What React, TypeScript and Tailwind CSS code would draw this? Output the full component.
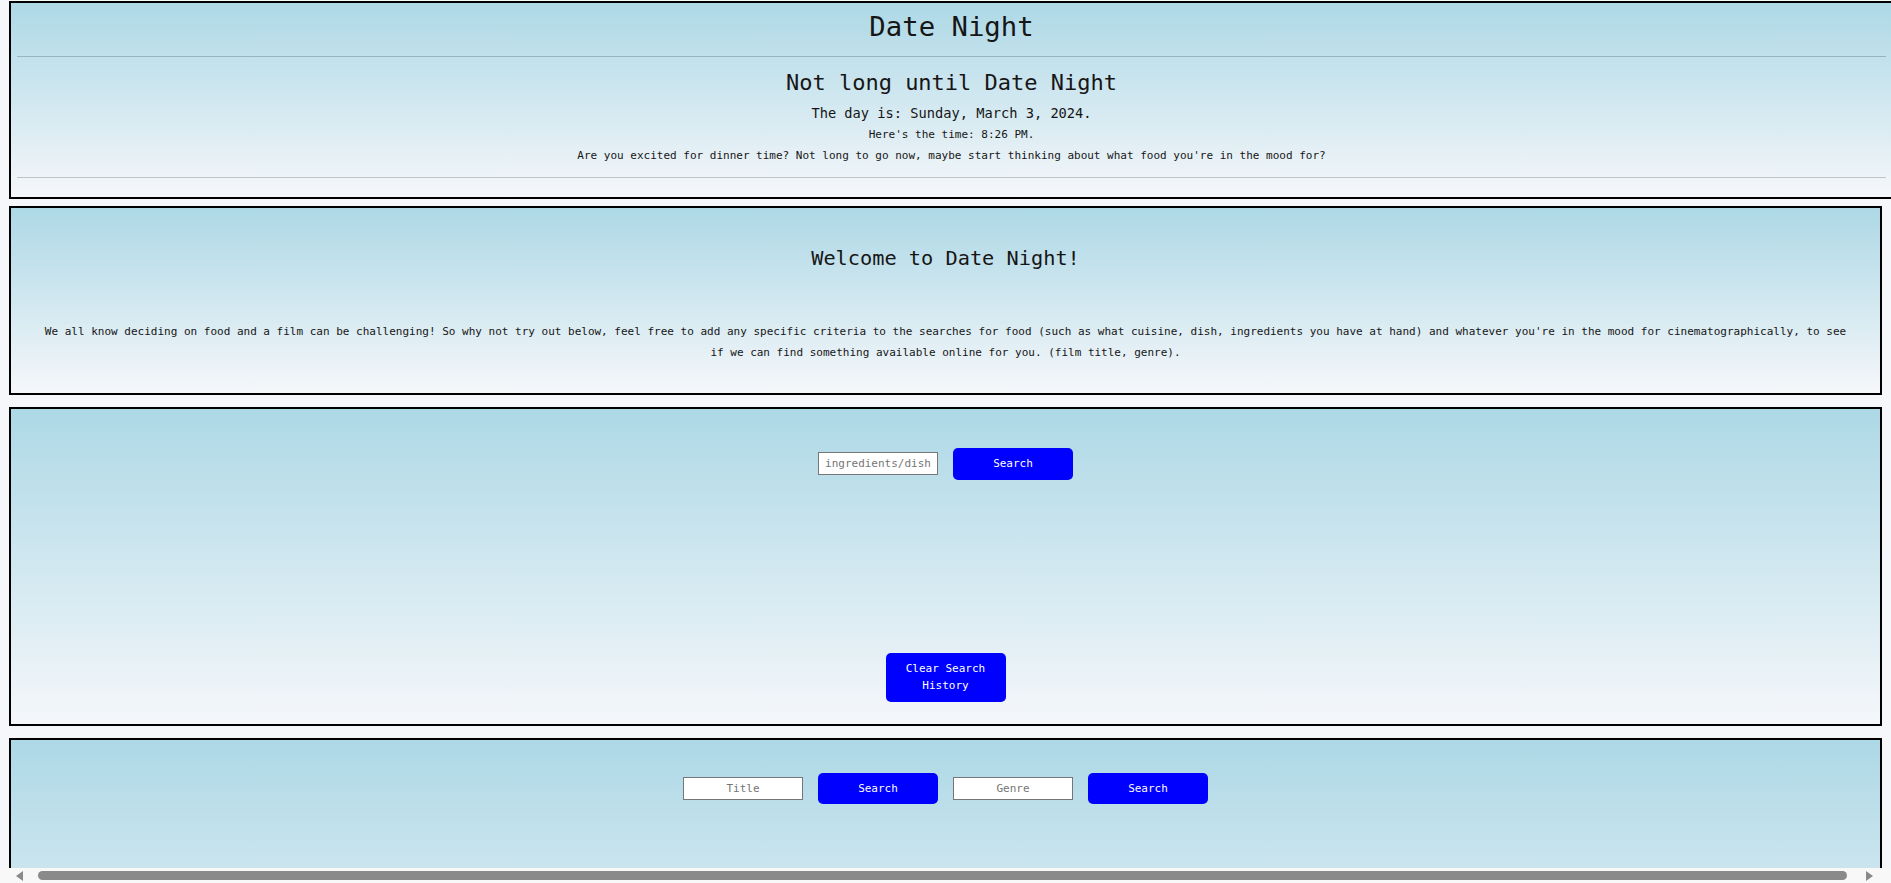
export default function App() {
  const box = "border-2 border-black bg-[linear-gradient(#add8e6,#f5f7fa)]";
  const btn =
    "w-[120px] rounded-[5px] bg-[#0000ff] py-[7px] text-[11px] leading-[17.5px] text-white";
  const inp =
    "w-[120px] h-[23px] border border-[#767676] bg-white text-center text-[11px] text-[#111] placeholder:text-[#757575] outline-none";
  return (
    <div className="h-screen w-full overflow-hidden flex flex-col bg-[#f5f7fa] text-[#161616] font-['DejaVu_Sans_Mono',monospace]">
      <div className="flex-1 min-h-0 overflow-hidden px-[9px]">
        <header className={`mt-px mr-[-12px] ${box} text-center`}>
          <h1 className="pt-[8px] pb-[13px] text-[27.3px] leading-[32px]">Date Night</h1>
          <div className="mx-[6px] h-px bg-black/20" />
          <h2 className="mt-[12px] text-[22px] leading-[28px]">Not long until Date Night</h2>
          <p className="mt-[7px] text-[13.7px] leading-[18px]">The day is: Sunday, March 3, 2024.</p>
          <p className="mt-[5px] text-[11px] leading-[16px]">Here's the time: 8:26 PM.</p>
          <p className="mt-[5px] text-[11px] leading-[16px]">
            Are you excited for dinner time? Not long to go now, maybe start thinking about what food you're in the mood for?
          </p>
          <div className="mt-[13px] mb-[19px] mx-[6px] h-px bg-black/20" />
        </header>

        <section className={`mt-[7px] ${box} text-center px-[28px] pt-[37px] pb-[30px]`}>
          <h2 className="text-[20.3px] leading-[26px]">Welcome to Date Night!</h2>
          <p className="mt-[50px] text-[11px] leading-[21px]">
            We all know deciding on food and a film can be challenging! So why not try out below, feel free to add any specific criteria to the searches for food (such as what cuisine, dish, ingredients you have at hand) and whatever you're in the mood for cinematographically, to see if we can find something available online for you. (film title, genre).
          </p>
        </section>

        <section className={`mt-[12px] ${box} flex flex-col items-center pt-[39px] pb-[22px]`}>
          <div className="flex items-center gap-[15px]">
            <input placeholder="ingredients/dish" className={inp} />
            <button className={btn}>Search</button>
          </div>
          <button className={`mt-[173px] px-[16px] ${btn}`}>Clear Search History</button>
        </section>

        <section className={`mt-[12px] ${box} min-h-[320px] flex justify-center items-start pt-[33px]`}>
          <div className="flex items-center gap-[15px]">
            <input placeholder="Title" className={inp} />
            <button className={btn}>Search</button>
            <input placeholder="Genre" className={inp} />
            <button className={btn}>Search</button>
          </div>
        </section>
      </div>

      <div className="h-[15px] shrink-0 bg-[#f8f8f8] flex items-center">
        <div className="w-[38px] h-full flex items-center pl-[15px]">
          <svg width="9" height="10" viewBox="0 0 9 10">
            <polygon points="8,0 8,10 1,5" fill="#8a8a8a" />
          </svg>
        </div>
        <div className="flex-1 h-[9px] rounded-full bg-[#8a8a8a]" />
        <div className="w-[44px] h-full flex items-center pl-[18px]">
          <svg width="9" height="10" viewBox="0 0 9 10">
            <polygon points="1,0 1,10 8,5" fill="#8a8a8a" />
          </svg>
        </div>
      </div>
    </div>
  );
}
